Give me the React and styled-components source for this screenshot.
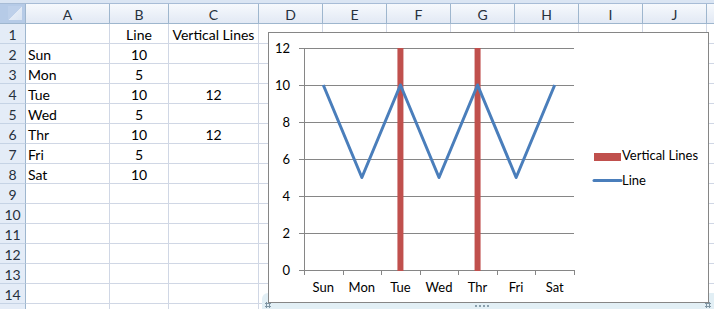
import React from "react";
import styled, { createGlobalStyle } from "styled-components";

const GlobalStyle = createGlobalStyle`
  html, body {
    margin: 0;
    padding: 0;
    background: #fff;
    overflow: hidden;
  }
  body {
    font-family: Lato, "Open Sans", sans-serif;
  }
`;

const colWidths = [84, 59, 90, 64, 64, 64, 64, 64, 64, 64, 64];
const letters = ["A", "B", "C", "D", "E", "F", "G", "H", "I", "J", ""];

const rows = [
  ["", "Line", "Vertical Lines"],
  ["Sun", "10", ""],
  ["Mon", "5", ""],
  ["Tue", "10", "12"],
  ["Wed", "5", ""],
  ["Thr", "10", "12"],
  ["Fri", "5", ""],
  ["Sat", "10", ""],
];

const days = ["Sun", "Mon", "Tue", "Wed", "Thr", "Fri", "Sat"];
const lineValues = [10, 5, 10, 5, 10, 5, 10];

export default function App() {
  return (
    <Page>
      <GlobalStyle />
      <TopBand />
      <Sheet>
        <Corner />
        {letters.map((l, i) => (
          <ColHead key={i}>{l}</ColHead>
        ))}
        {Array.from({ length: 15 }).map((_, r) => (
          <React.Fragment key={r}>
            <RowHead>{r < 14 ? r + 1 : ""}</RowHead>
            {colWidths.map((_, c) => {
              const value = rows[r] && c < 3 ? rows[r][c] : "";
              return (
                <Cell key={c} $align={c === 0 ? "left" : "center"}>
                  {value}
                </Cell>
              );
            })}
          </React.Fragment>
        ))}
      </Sheet>
      <ChartObject>
        <ChartPanel>
          <Chart />
        </ChartPanel>
        <FrameStrip>
          <Grip />
        </FrameStrip>
      </ChartObject>
    </Page>
  );
}

function Chart() {
  const left = 35;
  const right = 305;
  const top = 15;
  const bottom = 237;
  const unit = (bottom - top) / 12;
  const step = (right - left) / 7;
  const yOf = (v) => bottom - v * unit;
  const xOf = (i) => left + step * (i + 0.5);
  const points = lineValues.map((v, i) => `${xOf(i)},${yOf(v)}`).join(" ");
  const font = "Lato, sans-serif";

  return (
    <svg width="439" height="269" viewBox="0 0 439 269">
      {[0, 2, 4, 6, 8, 10, 12].map((v) => (
        <g key={v}>
          <line
            x1={left - 5}
            x2={right}
            y1={Math.round(yOf(v)) + 0.5}
            y2={Math.round(yOf(v)) + 0.5}
            stroke="#868686"
          />
          <text x={21} y={yOf(v) + 5} textAnchor="end" fontSize="13" fill="#000" fontFamily={font}>
            {v}
          </text>
        </g>
      ))}
      <line x1={left + 0.5} x2={left + 0.5} y1={top} y2={bottom + 1} stroke="#868686" />
      {Array.from({ length: 8 }).map((_, i) => (
        <line
          key={i}
          x1={Math.round(left + step * i) + 0.5}
          x2={Math.round(left + step * i) + 0.5}
          y1={bottom}
          y2={bottom + 5}
          stroke="#868686"
        />
      ))}
      {days.map((d, i) => (
        <text key={d} x={xOf(i)} y={259} textAnchor="middle" fontSize="13" fill="#000" fontFamily={font}>
          {d}
        </text>
      ))}
      {[2, 4].map((i) => (
        <rect key={i} x={xOf(i) - 3} y={top} width="6" height={bottom - top + 1} fill="#c0504d" />
      ))}
      <polyline points={points} fill="none" stroke="#4a7ebb" strokeWidth="3" strokeLinejoin="round" />
      <rect x="325" y="120" width="27" height="8" fill="#c0504d" />
      <text x="353" y="127" fontSize="13" fill="#000" fontFamily={font}>
        Vertical Lines
      </text>
      <line x1="325" x2="352" y1="147.5" y2="147.5" stroke="#4a7ebb" strokeWidth="3" strokeLinecap="round" />
      <text x="353" y="151.5" fontSize="13" fill="#000" fontFamily={font}>
        Line
      </text>
    </svg>
  );
}

const Page = styled.div`
  position: relative;
  width: 714px;
  height: 309px;
  overflow: hidden;
  background: #fff;
`;

const TopBand = styled.div`
  height: 3px;
  background: #dae5f3;
  border-bottom: 1px solid #a7bcd6;
`;

const Sheet = styled.div`
  display: grid;
  grid-template-columns: 26px ${colWidths.map((w) => `${w}px`).join(" ")};
  grid-auto-rows: 20px;
  font-size: 14px;
  color: #000;
`;

const Corner = styled.div`
  box-sizing: border-box;
  border-right: 1px solid #9eb6ce;
  border-bottom: 1px solid #9eb6ce;
  background: linear-gradient(135deg, #bdd0ea 0%, #bdd0ea 52%, #e3ebf6 53%, #d9e4f2 100%);
  background-size: 14px 14px;
  background-position: right 3px bottom 3px;
  background-repeat: no-repeat;
  background-color: #b6cbe7;
`;

const HeadBase = styled.div`
  box-sizing: border-box;
  display: flex;
  align-items: center;
  justify-content: center;
  border-right: 1px solid #9eb6ce;
  color: #27313d;
  font-size: 14px;
  padding-top: 1px;
`;

const ColHead = styled(HeadBase)`
  border-bottom: 1px solid #9eb6ce;
  background: linear-gradient(#f6f9fd, #e2e9f4);
`;

const RowHead = styled(HeadBase)`
  border-bottom: 1px solid #c5d3e5;
  background: #e4ecf7;
`;

const Cell = styled.div`
  box-sizing: border-box;
  display: flex;
  align-items: center;
  justify-content: ${(p) => (p.$align === "left" ? "flex-start" : "center")};
  padding: 1px 2px 0;
  border-right: 1px solid #d0d7e5;
  border-bottom: 1px solid #d0d7e5;
  white-space: nowrap;
  background: #fff;
`;

const ChartObject = styled.div`
  position: absolute;
  left: 262px;
  top: 32px;
  width: 452px;
  display: flex;
  flex-direction: column;
  align-items: flex-start;

  &::before,
  &::after {
    content: "";
    position: absolute;
    top: 261px;
    width: 12px;
    height: 16px;
    background:
      radial-gradient(circle, #7f95a3 0 1px, transparent 1.3px) 3px 9px / 3px 3px no-repeat,
      radial-gradient(circle, #7f95a3 0 1px, transparent 1.3px) 6px 9px / 3px 3px no-repeat,
      radial-gradient(circle, #7f95a3 0 1px, transparent 1.3px) 3px 12px / 3px 3px no-repeat,
      radial-gradient(circle, #7f95a3 0 1px, transparent 1.3px) 6px 12px / 3px 3px no-repeat,
      #e2eff5;
  }
  &::before {
    left: 0;
    border-radius: 6px 0 0 0;
  }
  &::after {
    right: 0;
    border-radius: 0 6px 0 0;
    transform: scaleX(-1);
  }
`;

const ChartPanel = styled.div`
  position: relative;
  z-index: 1;
  margin-left: 6px;
  width: 441px;
  height: 271px;
  box-sizing: border-box;
  border: 1px solid #868686;
  background: #fff;
`;

const FrameStrip = styled.div`
  align-self: stretch;
  height: 6px;
  display: flex;
  justify-content: center;
  align-items: center;
  padding-right: 12px;
  background: #e2eff5;
  border-bottom: 1px solid #c4d9e3;
`;

const Grip = styled.div`
  width: 15px;
  height: 2px;
  background: repeating-linear-gradient(90deg, #8aa0ad 0 2px, transparent 2px 4px);
`;
